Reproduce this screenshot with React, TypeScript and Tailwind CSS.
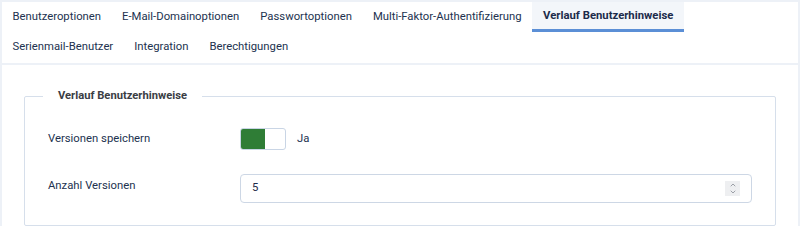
import { ChevronDown, ChevronUp } from 'lucide-react'

const tabsRow1 = [
  'Benutzeroptionen',
  'E-Mail-Domainoptionen',
  'Passwortoptionen',
  'Multi-Faktor-Authentifizierung',
  'Verlauf Benutzerhinweise',
]
const tabsRow2 = ['Serienmail-Benutzer', 'Integration', 'Berechtigungen']
const activeTab = 'Verlauf Benutzerhinweise'

function Tab({ label }: { label: string }) {
  const active = label === activeTab
  return (
    <button
      type="button"
      className={
        active
          ? 'h-[30px] border-b-[3px] border-[#5b8fd6] bg-[#f3f6fa] px-[11px] pt-[2px] text-[11.3px] font-bold text-[#1c2b4a]'
          : 'h-[30px] px-[10.5px] text-[11.3px] text-[#22324f]'
      }
    >
      {label}
    </button>
  )
}

export default function App() {
  return (
    <div className="h-[226px] w-[800px] overflow-hidden bg-white font-['Roboto',sans-serif]">
      <div className="border-2 border-[#edf1f7]">
        {/* Tabs */}
        <div className="flex flex-col border-b-2 border-[#edf1f7] pb-[1px]">
          <div className="flex items-center">
            {tabsRow1.map((t) => (
              <Tab key={t} label={t} />
            ))}
          </div>
          <div className="flex items-center">
            {tabsRow2.map((t) => (
              <Tab key={t} label={t} />
            ))}
          </div>
        </div>

        {/* Inhalt */}
        <div className="px-[22px] pt-[22px] pb-[20px]">
          <fieldset className="w-[752px] rounded-[2px] border border-[#d6dfeb] px-[23px] pb-[22px]">
            <legend className="-ml-[5px] px-[15px] text-[11.2px] leading-[18px] font-bold text-[#3a3d44]">
              Verlauf Benutzerhinweise
            </legend>

            <div className="mt-[23px] flex h-[22px] items-center">
              <label className="w-[192px] text-[11.3px] text-[#22324f]">Versionen speichern</label>
              <div className="flex h-[22px] w-[46px] overflow-hidden rounded-[3px] border border-[#c9d5e5] bg-white">
                <span className="h-full w-[24px] bg-[#2f7d36]" />
              </div>
              <span className="ml-[11px] text-[11.3px] text-[#22324f]">Ja</span>
            </div>

            <div className="mt-[24px] flex items-start">
              <label className="w-[192px] pt-[4px] text-[11.3px] text-[#22324f]">Anzahl Versionen</label>
              <div className="flex h-[29px] w-[512px] items-center justify-between rounded-[4px] border border-[#cdd7e5] bg-white pr-[11px] pl-[11px]">
                <span className="text-[11.3px] text-[#1c2b4a]">5</span>
                <span className="flex h-[15px] w-[15px] flex-col items-center justify-center bg-[#eeeff1] text-[#7d828c]">
                  <ChevronUp className="-mb-[1px] size-[8px]" strokeWidth={2.2} />
                  <ChevronDown className="size-[8px]" strokeWidth={2.2} />
                </span>
              </div>
            </div>
          </fieldset>
        </div>
      </div>
    </div>
  )
}
